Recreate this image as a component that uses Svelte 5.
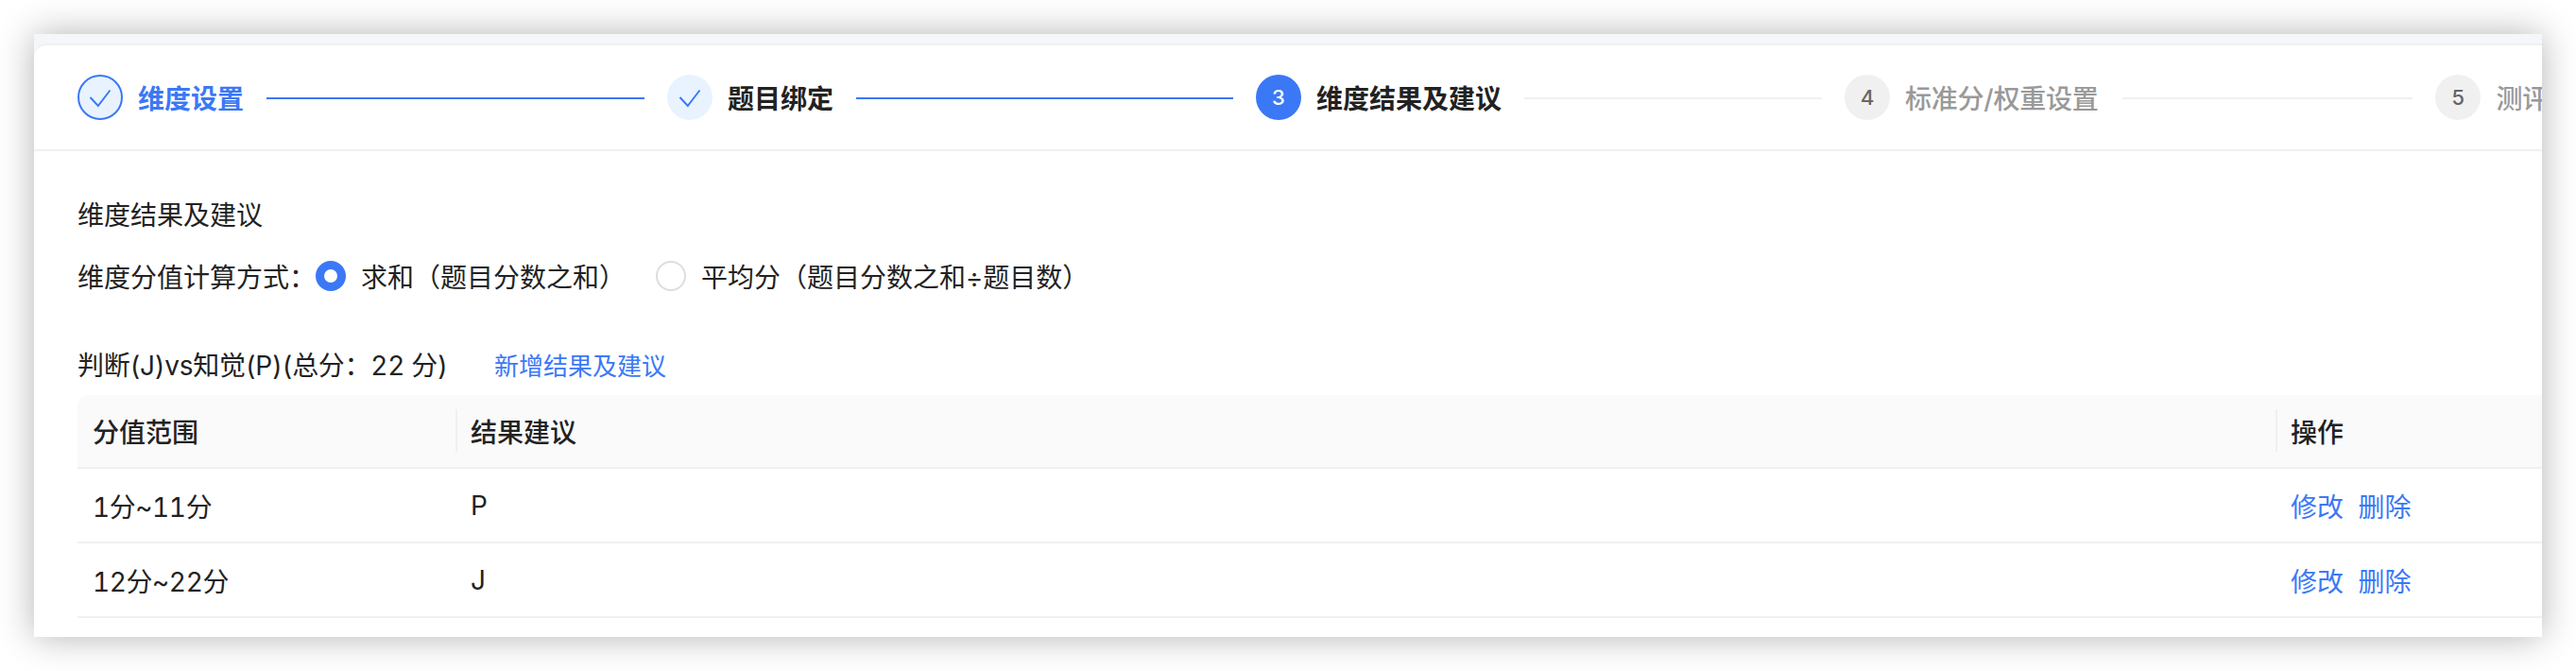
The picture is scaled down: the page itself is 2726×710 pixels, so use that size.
<script lang="ts">
  const steps = [
    { label: "维度设置", status: "done" },
    { label: "题目绑定", status: "passed", line: "first" },
    { label: "维度结果及建议", status: "current", num: 3, line: "second" },
    { label: "标准分/权重设置", status: "todo", num: 4, line: "mid" },
    { label: "测评设置", status: "todo", num: 5, line: "short" },
  ];

  const rows = [
    { range: "1分~11分", advice: "P" },
    { range: "12分~22分", advice: "J" },
  ];

  let mode = $state("sum");
</script>

<div class="page">
  <div class="card">
    <div class="panel">
      <div class="steps">
        {#each steps as step, i}
          {#if i > 0}
            <div class="line {step.line}" class:on={step.status !== "todo"}></div>
          {/if}
          <div class="step {step.status}">
            <span class="dot">
              {#if step.num}
                {step.num}
              {:else}
                <svg width="48" height="48" viewBox="0 0 48 48" fill="none">
                  <path d="M13.5 24 L21.8 33 L34.5 16.5" stroke="#3b78f6" stroke-width="2" />
                </svg>
              {/if}
            </span>
            <span class="step-label">{step.label}</span>
          </div>
        {/each}
      </div>

      <div class="content">
        <div class="title">维度结果及建议</div>

        <div class="calc">
          <span class="calc-label">维度分值计算方式：</span>
          <button class="radio" class:checked={mode === "sum"} onclick={() => (mode = "sum")}>
            <i></i>求和（题目分数之和）
          </button>
          <button class="radio" class:checked={mode === "avg"} onclick={() => (mode = "avg")}>
            <i></i>平均分（题目分数之和÷题目数）
          </button>
        </div>

        <div class="dim-head">
          <span class="dim-name">判断(J)vs知觉(P)(总分：22 分)</span>
          <a href="#add" class="link add">新增结果及建议</a>
        </div>

        <table>
          <colgroup>
            <col class="col-range" />
            <col />
            <col class="col-ops" />
          </colgroup>
          <thead>
            <tr>
              <th>分值范围</th>
              <th class="sep">结果建议</th>
              <th class="sep">操作</th>
            </tr>
          </thead>
          <tbody>
            {#each rows as row}
              <tr>
                <td class="range">{row.range}</td>
                <td>{row.advice}</td>
                <td class="ops">
                  <a href="#edit" class="link">修改</a>
                  <a href="#del" class="link">删除</a>
                </td>
              </tr>
            {/each}
          </tbody>
        </table>
      </div>
    </div>
  </div>
</div>

<style>
  :global(body) {
    background: #fff;
    font-family: Inter, "Noto Sans CJK SC", sans-serif;
    font-variant-numeric: tabular-nums;
  }

  .page {
    padding: 36px;
  }

  .card {
    background: #f4f6fa;
    padding-top: 10px;
    box-shadow: 0 0 36px rgba(0, 0, 0, 0.3);
    overflow: hidden;
  }

  .panel {
    background: #fff;
    border-top: 2px solid #f0f0f0;
    border-radius: 14px 0 0 0;
    color: #222;
    font-size: 28px;
  }

  .steps {
    display: flex;
    align-items: center;
    height: 110px;
    padding-left: 46px;
    border-bottom: 2px solid #f0f0f0;
    overflow: hidden;
  }

  .step {
    display: flex;
    align-items: center;
    flex: none;
    gap: 16px;
    font-weight: 600;
    white-space: nowrap;
  }

  .dot {
    display: flex;
    align-items: center;
    justify-content: center;
    width: 48px;
    height: 48px;
    border-radius: 50%;
    box-sizing: border-box;
    font-size: 22px;
    font-weight: 500;
    background: #f0f0f0;
    color: #666;
  }

  .done .dot {
    background: #e8f3ff;
    border: 2px solid #3b78f6;
  }

  .done svg {
    flex: none;
    margin: -2px;
  }

  .passed .dot {
    background: #e8f3ff;
  }

  .current .dot {
    background: #3b78f6;
    color: #fff;
  }

  .done .step-label {
    color: #3b78f6;
  }

  .todo .step-label {
    color: #999;
    font-weight: 500;
    letter-spacing: -0.25px;
  }

  .line {
    flex: none;
    height: 2px;
    margin: 2px 24px 0;
    background: #f0f0f0;
  }

  .line.on {
    background: #3b78f6;
  }

  .line.first {
    width: 400px;
  }

  .line.second {
    width: 399px;
  }

  .line.mid {
    width: 315px;
  }

  .line.short {
    width: 307px;
    margin-left: 26px;
  }

  .content {
    padding: 48px 0 20px 46px;
  }

  .title {
    height: 40px;
    line-height: 40px;
  }

  .calc {
    display: flex;
    align-items: center;
    height: 40px;
    margin-top: 24px;
  }

  .calc-label {
    width: 252px;
    flex: none;
    white-space: nowrap;
  }

  .radio {
    display: flex;
    align-items: center;
    gap: 16px;
    margin-right: 32px;
    padding: 0;
    border: none;
    background: none;
    color: inherit;
    font: inherit;
    white-space: nowrap;
    cursor: pointer;
  }

  .radio i {
    width: 32px;
    height: 32px;
    border: 2px solid #ddd;
    border-radius: 50%;
    box-sizing: border-box;
  }

  .radio.checked i {
    border: 9px solid #3b78f6;
  }

  .dim-head {
    display: flex;
    align-items: center;
    height: 40px;
    margin-top: 53px;
    margin-bottom: 13px;
  }

  .dim-name {
    width: 441px;
    flex: none;
    letter-spacing: -0.3px;
    white-space: nowrap;
  }

  .link {
    color: #3b78f6;
    text-decoration: none;
  }

  .add {
    font-size: 26px;
  }

  table {
    width: 100%;
    table-layout: fixed;
    border-collapse: separate;
    border-spacing: 0;
  }

  .col-range {
    width: 400px;
  }

  .col-ops {
    width: 282px;
  }

  th {
    position: relative;
    height: 76px;
    padding: 0 16px;
    background: #fafafa;
    border-bottom: 2px solid #f0f0f0;
    text-align: left;
    font-weight: 500;
  }

  th:first-child {
    border-top-left-radius: 12px;
  }

  th.sep::before {
    content: "";
    position: absolute;
    left: 0;
    top: 15px;
    bottom: 16px;
    width: 2px;
    background: #f0f0f0;
  }

  td {
    height: 77px;
    padding: 0 16px;
    border-bottom: 2px solid #f0f0f0;
  }

  .range {
    letter-spacing: -0.4px;
  }

  .ops a + a {
    margin-left: 8px;
  }
</style>
